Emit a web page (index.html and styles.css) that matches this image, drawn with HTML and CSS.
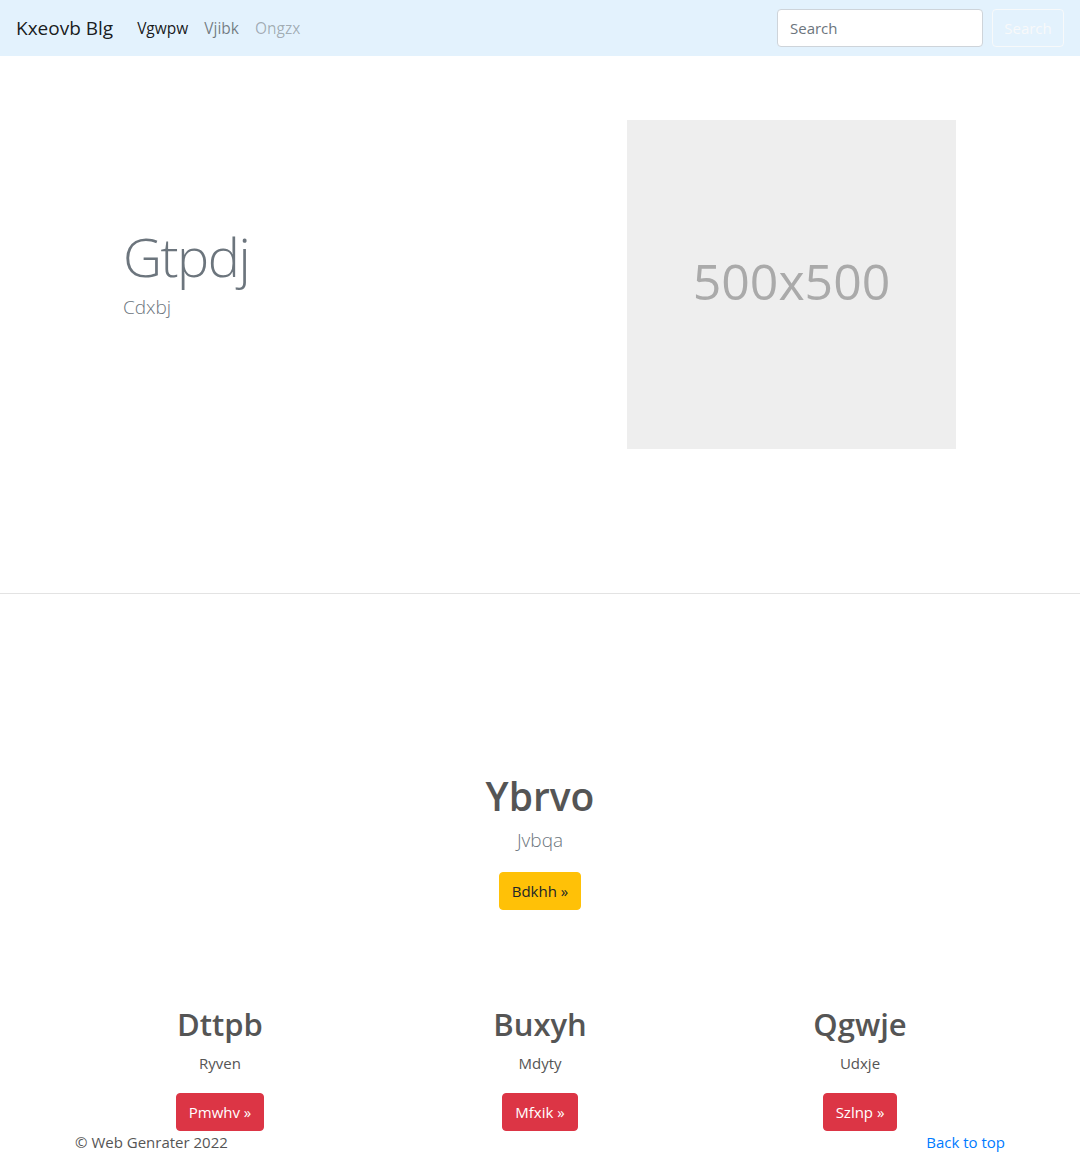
FILE: index.html
```html
<!DOCTYPE html>
<html lang="en">
<head>
<meta charset="utf-8">
<title>Kxeovb Blg</title>
<link rel="stylesheet" href="styles.css">
</head>
<body>
<nav class="navbar">
  <a class="brand" href="#">Kxeovb Blg</a>
  <ul class="nav">
    <li><a class="nav-link active" href="#">Vgwpw</a></li>
    <li><a class="nav-link" href="#">Vjibk</a></li>
    <li><a class="nav-link disabled" href="#">Ongzx</a></li>
  </ul>
  <form class="search">
    <input class="search-input" type="text" placeholder="Search">
    <button class="search-btn" type="button">Search</button>
  </form>
</nav>

<section class="hero">
  <div class="hero-inner">
    <div class="hero-text">
      <h1 class="display">Gtpdj</h1>
      <p class="lead">Cdxbj</p>
    </div>
    <div class="hero-media">
      <div class="placeholder">500x500</div>
    </div>
  </div>
</section>

<hr class="divider">

<section class="feature">
  <h1 class="feature-title">Ybrvo</h1>
  <p class="lead feature-lead">Jvbqa</p>
  <a class="btn btn-warning" href="#">Bdkhh »</a>
</section>

<section class="cols">
  <div class="col">
    <h2 class="col-title">Dttpb</h2>
    <p class="col-text">Ryven</p>
    <a class="btn btn-danger" href="#">Pmwhv »</a>
  </div>
  <div class="col">
    <h2 class="col-title">Buxyh</h2>
    <p class="col-text">Mdyty</p>
    <a class="btn btn-danger" href="#">Mfxik »</a>
  </div>
  <div class="col">
    <h2 class="col-title">Qgwje</h2>
    <p class="col-text">Udxje</p>
    <a class="btn btn-danger" href="#">Szlnp »</a>
  </div>
</section>

<footer class="footer">
  <p class="copy">© Web Genrater 2022</p>
  <a class="top-link" href="#">Back to top</a>
</footer>
</body>
</html>
```

FILE: styles.css
```css
* { box-sizing: border-box; }
html, body { margin: 0; padding: 0; }
body {
  font-family: "Open Sans", "Noto Sans", "Liberation Sans", sans-serif;
  font-size: 16px;
  line-height: 1.5;
  color: #212529;
  background: #fff;
}
a { text-decoration: none; }

.navbar {
  height: 56px;
  background: #e3f2fd;
  display: flex;
  align-items: center;
  padding: 0 16px;
}
.brand {
  font-size: 19px;
  color: rgba(0,0,0,.9);
  margin-right: 16px;
  line-height: 30px;
}
.nav {
  display: flex;
  list-style: none;
  margin: 0;
  padding: 0;
  flex: 1;
}
.nav-link {
  display: block;
  padding: 8px;
  line-height: 24px;
  color: rgba(0,0,0,.5);
  font-size: 15.5px;
}
.nav-link.active { color: rgba(0,0,0,.9); }
.nav-link.disabled { color: rgba(0,0,0,.3); }
.search { display: flex; align-items: center; }
.search-input {
  width: 206px;
  height: 38px;
  padding: 6px 12px;
  border: 1px solid #ced4da;
  border-radius: 4px;
  font: inherit;
  font-size: 15px;
  color: #495057;
  background: #fff;
  margin-right: 9px;
}
.search-input::placeholder { color: #6c757d; }
.search-btn {
  width: 72px;
  height: 38px;
  padding: 6px 8px;
  border: 1px solid rgba(248,249,250,.9);
  background: transparent;
  border-radius: 4px;
  font: inherit;
  font-size: 15px;
  color: #f8f9fa;
}

.hero { padding: 16px 0 96px; }
.hero-inner {
  width: 930px;
  margin: 0 auto;
  display: flex;
  align-items: center;
}
.hero-text { flex: 1; padding: 48px 48px 74px; }
.hero-media {
  flex: 1;
  padding: 48px 49px 48px 48px;
  display: flex;
  justify-content: flex-end;
}
.display {
  font-size: 54px;
  font-weight: 300;
  letter-spacing: -1.5px;
  line-height: 64px;
  color: #6c757d;
  margin: 0;
}
.lead {
  font-size: 19px;
  font-weight: 300;
  color: #6c757d;
  margin: 0 0 16px;
}
.hero-text .lead { margin: 6px 0 0; line-height: 26px; }
.placeholder {
  width: 329px;
  height: 329px;
  background: #eee;
  color: #aaa;
  font-size: 50px;
  padding-bottom: 6px;
  display: flex;
  align-items: center;
  justify-content: center;
}

.divider {
  margin: 0;
  border: 0;
  border-top: 1px solid #e3e3e3;
}

.feature {
  text-align: center;
  padding-top: 179px;
}
.feature-title {
  font-size: 39px;
  font-weight: 600;
  line-height: 1.2;
  color: #555;
  margin: 0 0 6px;
}
.feature-lead { margin-bottom: 18px; }

.btn {
  display: inline-block;
  padding: 6px 12px;
  font-size: 15px;
  line-height: 24px;
  border: 1px solid transparent;
  border-radius: 4px;
}
.btn-warning { background: #ffc107; border-color: #ffc107; color: #212529; }
.btn-danger { background: #dc3545; border-color: #dc3545; color: #fff; }

.cols {
  width: 960px;
  margin: 0 auto;
  display: flex;
  padding-top: 96px;
}
.col { flex: 1; text-align: center; padding: 0 15px; }
.col-title {
  font-size: 31px;
  font-weight: 600;
  line-height: 1.2;
  color: #555;
  margin: 0 0 9px;
}
.col-text {
  color: #555;
  font-size: 15px;
  margin: 0 0 18px;
}

.footer {
  width: 930px;
  margin: 0 auto;
  display: flex;
  justify-content: space-between;
  align-items: center;
}
.copy { margin: 0; color: #555; font-size: 15px; }
.top-link { color: #007bff; font-size: 15px; }
```
